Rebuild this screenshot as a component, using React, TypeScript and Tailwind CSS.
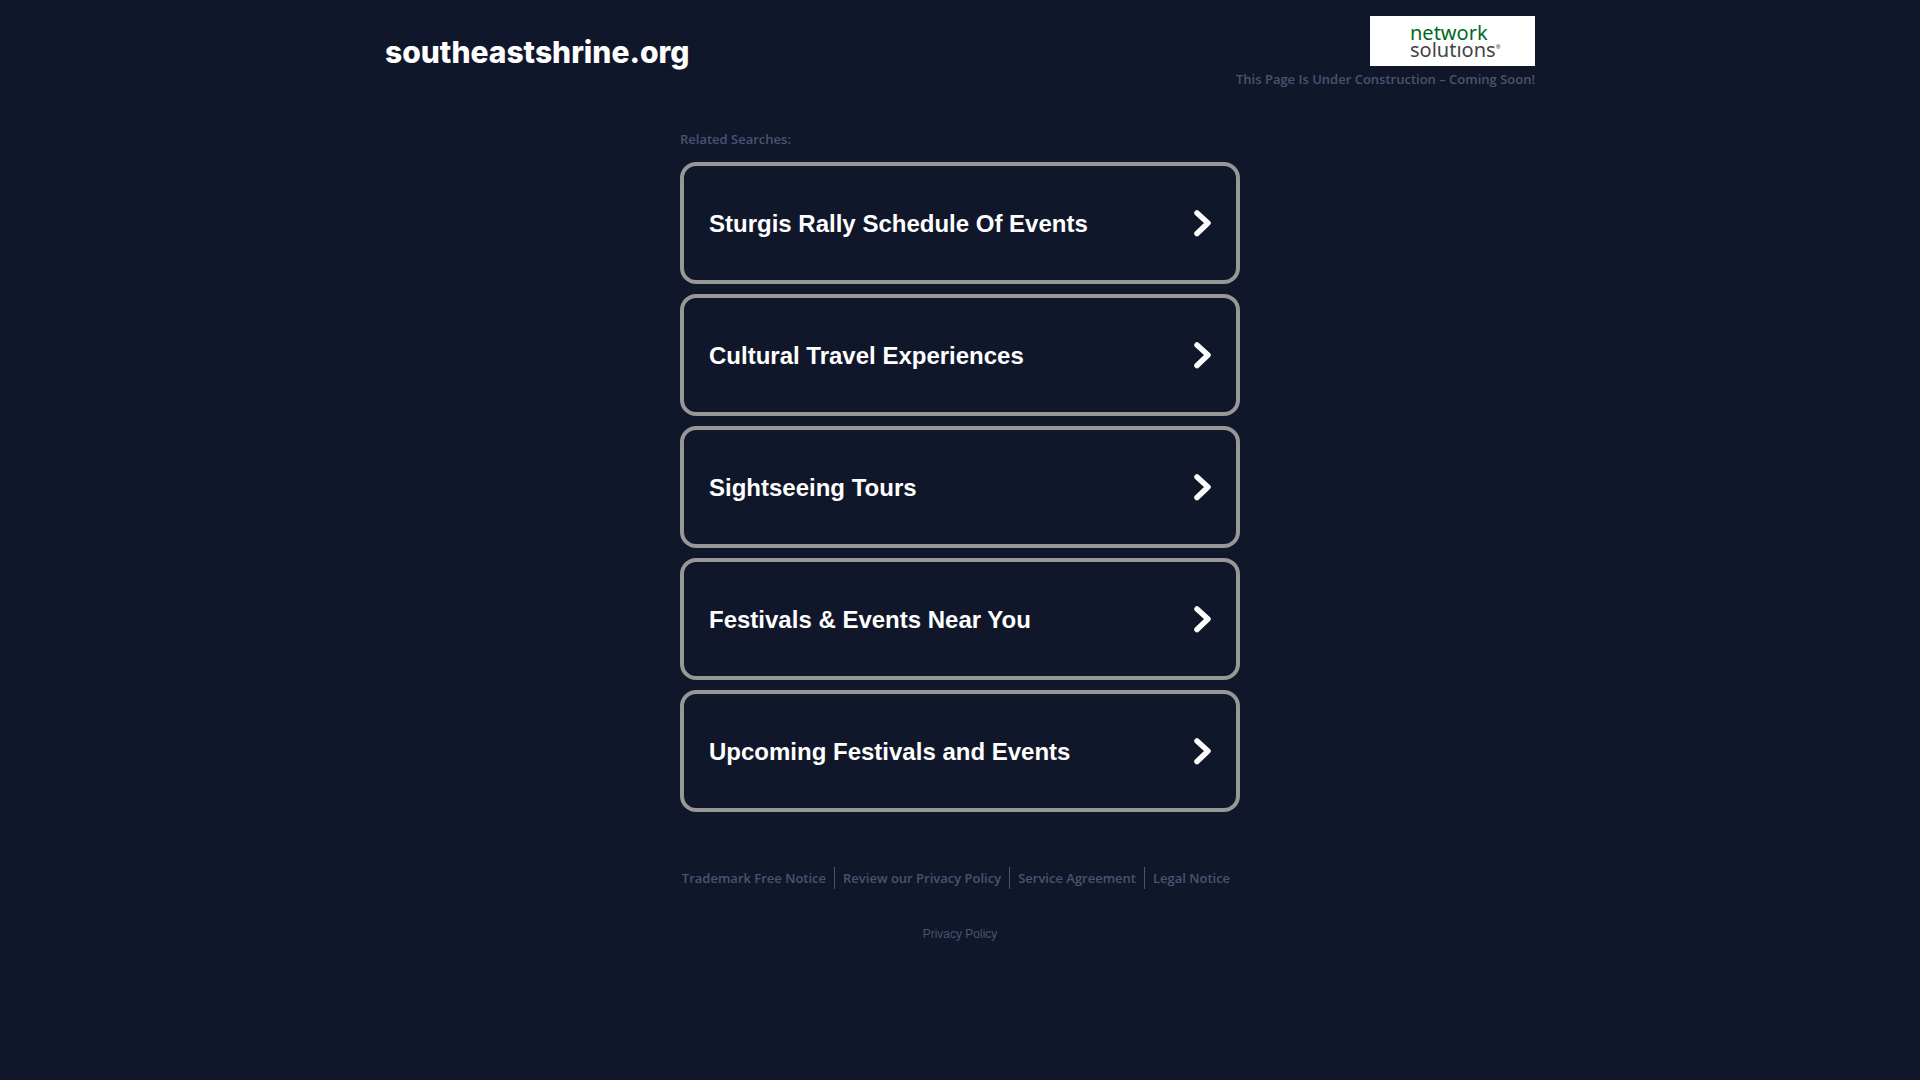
// src/App.tsx
const searches = [
  "Sturgis Rally Schedule Of Events",
  "Cultural Travel Experiences",
  "Sightseeing Tours",
  "Festivals & Events Near You",
  "Upcoming Festivals and Events",
];

const footerLinks = [
  "Trademark Free Notice",
  "Review our Privacy Policy",
  "Service Agreement",
  "Legal Notice",
];

function Chevron() {
  return (
    <svg
      viewBox="0 0 18 27"
      className="w-[18px] h-[27px] shrink-0"
      fill="none"
      stroke="white"
      strokeWidth="5.5"
      strokeLinecap="round"
      strokeLinejoin="round"
      aria-hidden="true"
    >
      <path d="M4 3 L15 13 L4 23.5" />
    </svg>
  );
}

function Logo() {
  return (
    <div className="w-[165px] h-[50px] pl-10 pt-2 bg-white font-['Noto_Sans',sans-serif] text-[20px] leading-[17px] font-normal">
      <div className="text-[#00691f]">network</div>
      <div className="flex text-[#444444]">
        solutıons
        <span className="text-[6px] leading-3">®</span>
      </div>
    </div>
  );
}

export function App() {
  return (
    <div className="min-h-screen bg-[#11172a] font-['Open_Sans',sans-serif] text-[13px] font-semibold text-[#4b5272]">
      <header className="flex items-start justify-between max-w-[1150px] mx-auto pt-4">
        <h1 className="pt-4 font-[Inter,sans-serif] text-[30px] leading-10 font-extrabold text-white">
          southeastshrine.org
        </h1>
        <div className="flex flex-col items-end gap-1">
          <Logo />
          <p className="leading-[18px]">This Page Is Under Construction – Coming Soon!</p>
        </div>
      </header>

      <main className="max-w-[560px] mx-auto pt-[42px]">
        <h2 className="leading-[18px]">Related Searches:</h2>
        <ul className="flex flex-col gap-2.5 pt-3.5">
          {searches.map((search) => (
            <li key={search}>
              <a
                href="#"
                className="flex items-center justify-between h-[122px] px-[25px] border-4 border-[#979797] rounded-2xl
                           font-['Liberation_Sans',Arial,sans-serif] text-2xl font-bold text-white"
              >
                <span className="pt-px">{search}</span>
                <Chevron />
              </a>
            </li>
          ))}
        </ul>
      </main>

      <footer className="flex flex-col items-center pt-[55px]">
        <nav className="flex pr-2">
          {footerLinks.map((link) => (
            <a
              key={link}
              href="#"
              className="px-2 leading-[22px] border-r border-[#4b5272] last:border-r-0"
            >
              {link}
            </a>
          ))}
        </nav>
        <a href="#" className="mt-[37px] font-['Liberation_Sans',Arial,sans-serif] text-xs leading-4 font-normal">
          Privacy Policy
        </a>
      </footer>
    </div>
  );
}

export default App;
